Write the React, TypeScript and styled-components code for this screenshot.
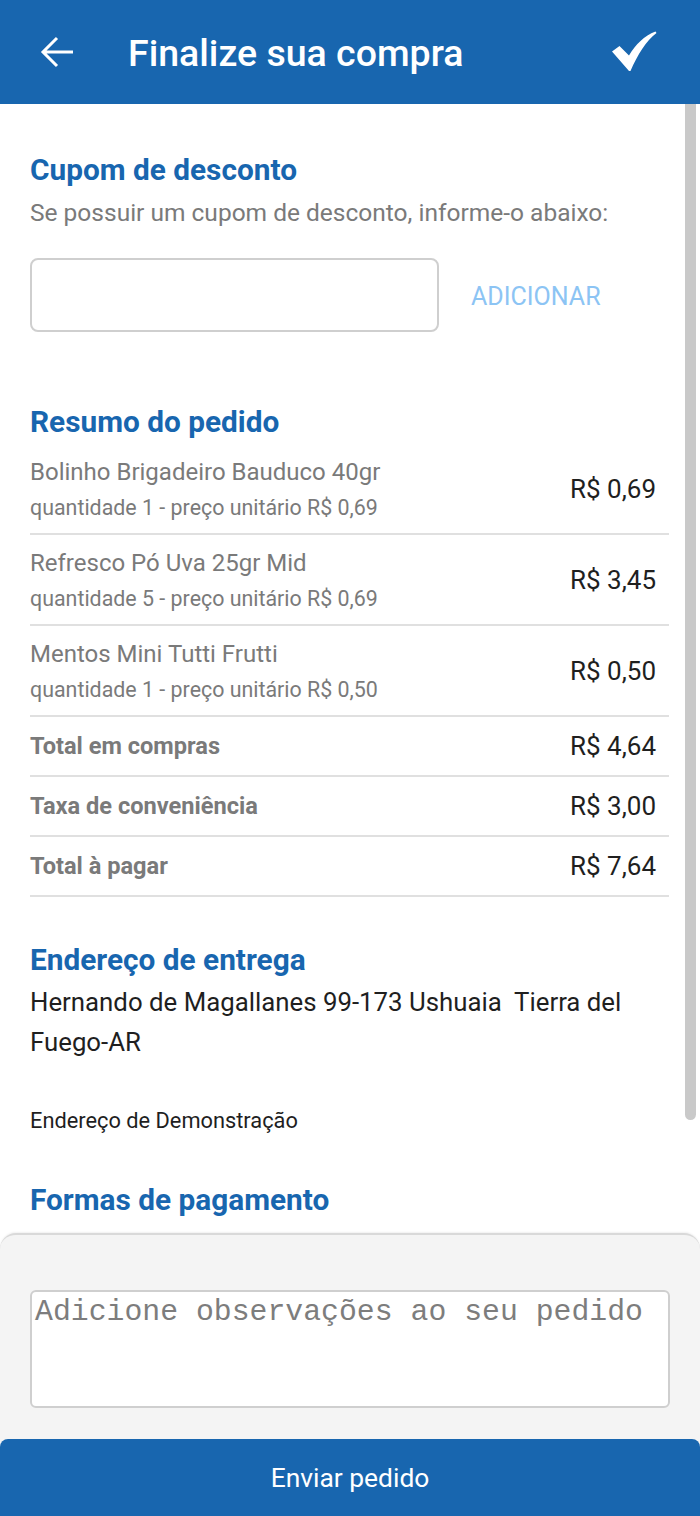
import styled, { createGlobalStyle } from "styled-components";

const GlobalStyle = createGlobalStyle`
  html, body {
    margin: 0;
    padding: 0;
    height: 100%;
    background: #ffffff;
    font-family: Roboto, "Noto Sans", sans-serif;
  }
  #root {
    height: 100%;
  }
  * {
    box-sizing: border-box;
  }
`;

const BLUE = "#1866af";

const Screen = styled.div`
  display: flex;
  flex-direction: column;
  height: 100vh;
  overflow: hidden;
`;

const Header = styled.header`
  flex-shrink: 0;
  height: 104px;
  background: ${BLUE};
  display: flex;
  align-items: center;
  padding: 0 42px 0 40px;
  color: #fff;
`;

const IconButton = styled.button`
  border: 0;
  background: none;
  padding: 0;
  display: flex;
  align-items: center;
  justify-content: center;
  color: #fff;
`;

const Title = styled.h1`
  flex: 1;
  margin: 0 0 0 54px;
  font-size: 37.5px;
  font-weight: 500;
  line-height: 44px;
  padding-top: 2px;
`;

const ScrollArea = styled.div`
  position: relative;
  flex: 1;
  min-height: 0;
  display: flex;
`;

const Scroll = styled.main`
  flex: 1;
  overflow-y: auto;
  scrollbar-width: none;
  &::-webkit-scrollbar {
    display: none;
  }
`;

// the page's scroll indicator, drawn over the content
const ScrollThumb = styled.div`
  position: absolute;
  top: 0;
  right: 4px;
  width: 11px;
  height: 1016px;
  background: #c9c9c9;
  border-radius: 0 0 6px 6px;
`;

const Content = styled.div`
  padding: 49px 16px 140px 30px;
`;

const SectionTitle = styled.h2<{ $top?: number }>`
  margin: ${({ $top }) => $top ?? 0}px 0 0;
  color: ${BLUE};
  font-size: 29.8px;
  font-weight: 700;
  line-height: 34px;
`;

const Hint = styled.p`
  margin: 11px 0 0;
  color: #7a7a7a;
  font-size: 24.5px;
  line-height: 30px;
`;

const CouponRow = styled.div`
  display: flex;
  align-items: center;
  gap: 32px;
  margin-top: 30px;
`;

const CouponInput = styled.input`
  width: 409px;
  height: 74px;
  border: 2px solid #cfcfcf;
  border-radius: 8px;
  background: #fff;
  font-size: 22px;
  padding: 0 14px;
  outline: none;
`;

const TextButton = styled.button`
  border: 0;
  background: none;
  padding: 0;
  margin-top: 2px;
  color: #8cc4f4;
  font-family: Roboto, sans-serif;
  font-size: 25px;
`;

const List = styled.div`
  margin: 5px 15px 0 0;
`;

const Row = styled.div<{ $height: number }>`
  display: flex;
  align-items: center;
  justify-content: space-between;
  height: ${({ $height }) => $height}px;
  border-bottom: 2px solid #e0e0e0;
  padding-right: 13px;
`;

const ItemInfo = styled.div`
  display: flex;
  flex-direction: column;
  gap: 8px;
  padding: 3px 0 2px;
`;

const ItemName = styled.span`
  color: #7a7a7a;
  font-size: 24px;
  line-height: 30px;
`;

const ItemSub = styled.span`
  color: #7a7a7a;
  font-size: 21.4px;
  line-height: 26px;
`;

const Label = styled.span`
  color: #7a7a7a;
  font-size: 23.6px;
  font-weight: 700;
`;

const Price = styled.span`
  color: #1f1f1f;
  font-size: 26px;
`;

const Address = styled.p`
  margin: 5px 0 0;
  color: #1f1f1f;
  font-size: 25.8px;
  line-height: 40px;
`;

const AddressNote = styled.p`
  margin: 46px 0 0;
  color: #1f1f1f;
  font-size: 21.8px;
  line-height: 26px;
`;

const Footer = styled.footer`
  flex-shrink: 0;
  background: #f4f4f4;
  border-top: 2px solid #d9d9d9;
  border-radius: 16px 16px 0 0;
  box-shadow: 0 -1px 2px rgba(0, 0, 0, 0.06);
  display: flex;
  flex-direction: column;
`;

const Notes = styled.textarea`
  margin: 55px 30px 0 30px;
  height: 118px;
  border: 2px solid #cfcfcf;
  border-radius: 6px;
  background: #fff;
  resize: none;
  padding: 2px 3px;
  font-family: "Liberation Mono", monospace;
  font-size: 29.8px;
  line-height: 36px;
  outline: none;
  &::placeholder {
    color: #7d7d7d;
  }
`;

const SendButton = styled.button`
  margin-top: 31px;
  height: 77px;
  border: 0;
  border-radius: 8px 8px 0 0;
  background: ${BLUE};
  color: #fff;
  font-family: Roboto, sans-serif;
  font-size: 26.4px;
`;

const items = [
  { name: "Bolinho Brigadeiro Bauduco 40gr", qty: 1, unit: "0,69", total: "0,69" },
  { name: "Refresco Pó Uva 25gr Mid", qty: 5, unit: "0,69", total: "3,45" },
  { name: "Mentos Mini Tutti Frutti", qty: 1, unit: "0,50", total: "0,50" },
];

const totals = [
  { label: "Total em compras", value: "4,64" },
  { label: "Taxa de conveniência", value: "3,00" },
  { label: "Total à pagar", value: "7,64" },
];

const BackIcon = () => (
  <svg width="34" height="34" viewBox="0 0 34 34" fill="none">
    <path
      d="M33 17H3M17 3L3 17l14 14"
      stroke="currentColor"
      strokeWidth="3"
      strokeLinejoin="miter"
    />
  </svg>
);

const CheckIcon = () => (
  <svg width="48" height="44" viewBox="0 0 48 44">
    <path
      d="M2 21.5 L9.5 16 L19 25.5 C26 14 34 6 45.5 1.5 L46.5 3 C36 11 27.5 25 20.5 41 L19 41 Z"
      fill="currentColor"
    />
  </svg>
);

export default function App() {
  return (
    <>
      <GlobalStyle />
      <Screen>
        <Header>
          <IconButton aria-label="Voltar">
            <BackIcon />
          </IconButton>
          <Title>Finalize sua compra</Title>
          <IconButton aria-label="Confirmar">
            <CheckIcon />
          </IconButton>
        </Header>
        <ScrollArea>
          <Scroll>
            <Content>
              <SectionTitle>Cupom de desconto</SectionTitle>
              <Hint>Se possuir um cupom de desconto, informe-o abaixo:</Hint>
              <CouponRow>
                <CouponInput type="text" />
                <TextButton>ADICIONAR</TextButton>
              </CouponRow>

              <SectionTitle $top={73}>Resumo do pedido</SectionTitle>
              <List>
                {items.map((item) => (
                  <Row $height={91} key={item.name}>
                    <ItemInfo>
                      <ItemName>{item.name}</ItemName>
                      <ItemSub>
                        quantidade {item.qty} - preço unitário R$ {item.unit}
                      </ItemSub>
                    </ItemInfo>
                    <Price>R$ {item.total}</Price>
                  </Row>
                ))}
                {totals.map((t) => (
                  <Row $height={60} key={t.label}>
                    <Label>{t.label}</Label>
                    <Price>R$ {t.value}</Price>
                  </Row>
                ))}
              </List>

              <SectionTitle $top={46}>Endereço de entrega</SectionTitle>
              <Address>
                Hernando de Magallanes 99-173 Ushuaia&nbsp; Tierra del Fuego-AR
              </Address>
              <AddressNote>Endereço de Demonstração</AddressNote>

              <SectionTitle $top={49}>Formas de pagamento</SectionTitle>
            </Content>
          </Scroll>
          <ScrollThumb />
        </ScrollArea>
        <Footer>
          <Notes placeholder="Adicione observações ao seu pedido" />
          <SendButton>Enviar pedido</SendButton>
        </Footer>
      </Screen>
    </>
  );
}
